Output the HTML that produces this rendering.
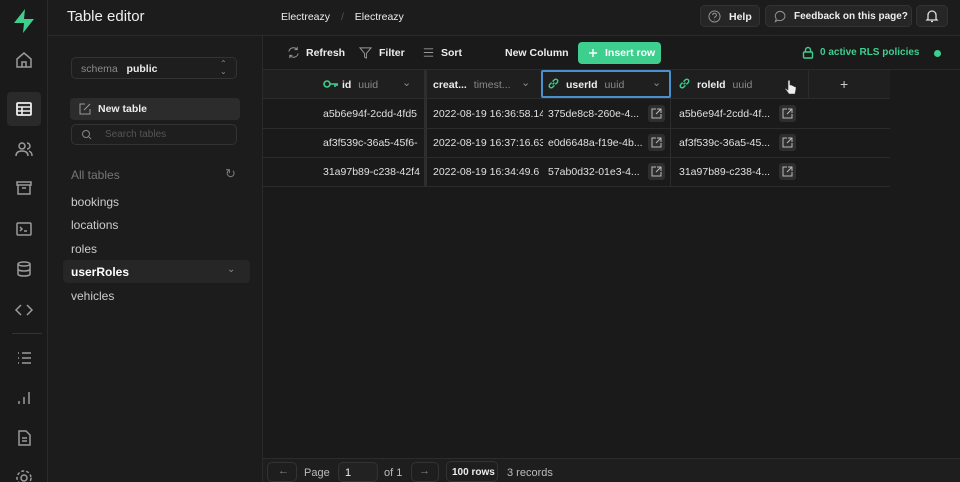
<!DOCTYPE html>
<html><head><style>
*{box-sizing:border-box;margin:0;padding:0}
html,body{width:960px;height:482px;overflow:hidden}
body{background:#1c1c1c;font-family:"Liberation Sans",sans-serif;color:#ededed;position:relative;font-size:11px}
.abs{position:absolute}
.ic{stroke:#9a9a9a;fill:none;stroke-width:1.5}
.b{font-weight:bold;font-size:10.5px}
.g{color:#8a8a8a}
.btn{position:absolute;border:1px solid #333;border-radius:5px;background:#262626}
.cell{position:absolute;font-size:10.5px;color:#e0e0e0;white-space:nowrap;overflow:hidden}
.ext{position:absolute;width:17px;height:17px;background:#2e2e2e;border-radius:3px}
.ext svg{position:absolute;left:3px;top:3px}
</style></head><body>
<div class="abs" style="left:0;top:0;width:48px;height:482px;background:#1a1a1a;border-right:1px solid #2a2a2a"></div>
<svg class="abs" style="left:12px;top:8px" width="24" height="26" viewBox="0 0 24 26"><path d="M13 1 L2 15 H12 L11 25 L22 11 H12 Z" fill="#3ecf8e"/></svg>
<svg class="abs" style="left:14px;top:50px" width="20" height="20" viewBox="0 0 20 20"><path class="ic" d="M3 9 L10 3 L17 9 V17 H3 Z M8 17 V12 H12 V17"/></svg>
<div class="abs" style="left:7px;top:92px;width:34px;height:34px;background:#2a2a2a;border-radius:4px"></div>
<svg class="abs" style="left:14px;top:99px" width="20" height="20" viewBox="0 0 20 20"><rect x="3" y="4" width="14" height="12" rx="1" fill="none" stroke="#eee" stroke-width="1.8"/><path d="M3 8H17M3 12H17M8 8V16" stroke="#eee" stroke-width="1.6"/></svg>
<svg class="abs" style="left:14px;top:139px" width="20" height="20" viewBox="0 0 20 20"><circle class="ic" cx="8" cy="7" r="3"/><path class="ic" d="M2 17c0-4 3-5 6-5s6 1 6 5M13 4a3 3 0 010 6M15 12c2 1 3 2 3 5"/></svg>
<svg class="abs" style="left:14px;top:178px" width="20" height="20" viewBox="0 0 20 20"><path class="ic" d="M3 4H17V7H3Z M4 7V16H16V7 M8 10H12"/></svg>
<svg class="abs" style="left:14px;top:219px" width="20" height="20" viewBox="0 0 20 20"><rect class="ic" x="3" y="4" width="14" height="12" rx="1"/><path class="ic" d="M6 8L8 10L6 12M10 12H13"/></svg>
<svg class="abs" style="left:14px;top:259px" width="20" height="20" viewBox="0 0 20 20"><ellipse class="ic" cx="10" cy="5" rx="6" ry="2"/><path class="ic" d="M4 5V15C4 16 6 17 10 17S16 16 16 15V5M4 10C4 11 6 12 10 12S16 11 16 10"/></svg>
<svg class="abs" style="left:14px;top:300px" width="20" height="20" viewBox="0 0 20 20"><path class="ic" d="M7 5L2 10L7 15M13 5L18 10L13 15"/></svg>
<div class="abs" style="left:12px;top:333px;width:30px;height:1px;background:#333"></div>
<svg class="abs" style="left:14px;top:348px" width="20" height="20" viewBox="0 0 20 20"><path class="ic" d="M4 5H5M4 10H5M4 15H5M8 5H17M8 10H17M8 15H17"/></svg>
<svg class="abs" style="left:14px;top:388px" width="20" height="20" viewBox="0 0 20 20"><path class="ic" d="M5 16V13M10 16V9M15 16V4"/></svg>
<svg class="abs" style="left:14px;top:428px" width="20" height="20" viewBox="0 0 20 20"><path class="ic" d="M5 3H12L16 7V17H5Z M8 10H13M8 13H13"/></svg>
<svg class="abs" style="left:14px;top:468px" width="20" height="20" viewBox="0 0 20 20"><circle class="ic" cx="10" cy="10" r="3"/><circle class="ic" cx="10" cy="10" r="7" stroke-dasharray="3 2"/></svg>
<div class="abs" style="left:48px;top:35px;width:912px;height:1px;background:#2a2a2a"></div>
<div class="abs" style="left:67px;top:8px;font-size:15px;color:#eee">Table editor</div>
<div class="abs" style="left:281px;top:11px;font-size:10.5px">Electreazy <span style="margin:0 8px;color:#555">/</span> Electreazy</div>
<div class="btn" style="left:700px;top:5px;width:60px;height:22px"></div>
<svg class="abs" style="left:708px;top:10px" width="13" height="13" viewBox="0 0 14 14"><circle cx="7" cy="7" r="6" fill="none" stroke="#999"/><path d="M5 5.5a2 2 0 113 1.7c-.8.4-1 .8-1 1.5M7 10.5v.5" stroke="#999" fill="none"/></svg>
<div class="abs b" style="left:729px;top:11px">Help</div>
<div class="btn" style="left:765px;top:5px;width:147px;height:22px"></div>
<svg class="abs" style="left:774px;top:10px" width="13" height="13" viewBox="0 0 14 14"><path d="M7 1.5a5.5 5 0 11-3 9.5L1.5 12.5l1-3A5.5 5 0 017 1.5z" fill="none" stroke="#999"/></svg>
<div class="abs b" style="left:794px;top:11px;font-size:10px">Feedback on this page?</div>
<div class="btn" style="left:916px;top:5px;width:32px;height:22px"></div>
<svg class="abs" style="left:925px;top:9px" width="14" height="14" viewBox="0 0 14 14"><path d="M3 10V6a4 4 0 018 0v4l1 1H2z M6 12.5h2" fill="none" stroke="#ddd" stroke-width="1.3"/></svg>
<div class="abs" style="left:262px;top:36px;width:1px;height:446px;background:#2a2a2a"></div>
<div class="btn" style="left:71px;top:57px;width:166px;height:22px;background:#1e1e1e"></div>
<div class="abs" style="left:81px;top:63px;font-size:10.5px"><span class="g">schema</span>&nbsp;&nbsp; <span class="b">public</span></div>
<div class="abs g" style="left:220px;top:60px;font-size:8px;line-height:8px">&#8963;<br>&#8964;</div>
<div class="abs" style="left:70px;top:98px;width:170px;height:22px;background:#2c2c2c;border-radius:4px"></div>
<svg class="abs" style="left:79px;top:103px" width="12" height="12" viewBox="0 0 12 12"><path d="M6 1H1V11H11V6M5 7L11 1" fill="none" stroke="#999"/></svg>
<div class="abs b" style="left:98px;top:103px">New table</div>
<div class="btn" style="left:71px;top:124px;width:166px;height:21px;background:#1e1e1e"></div>
<svg class="abs" style="left:81px;top:129px" width="11" height="11" viewBox="0 0 11 11"><circle cx="5" cy="5" r="3.5" fill="none" stroke="#888"/><path d="M8 8L10 10" stroke="#888"/></svg>
<div class="abs" style="left:105px;top:129px;font-size:10px;color:#555">Search tables</div>
<div class="abs" style="left:71px;top:168px;font-size:12px;color:#777">All tables</div>
<div class="abs" style="left:225px;top:166px;font-size:13px;color:#777">&#x21bb;</div>
<div class="abs" style="left:71px;top:195px;font-size:12px;color:#ccc">bookings</div>
<div class="abs" style="left:71px;top:218px;font-size:12px;color:#ccc">locations</div>
<div class="abs" style="left:71px;top:242px;font-size:12px;color:#ccc">roles</div>
<div class="abs" style="left:63px;top:260px;width:187px;height:23px;background:#262626;border-radius:4px"></div>
<div class="abs" style="left:71px;top:265px;font-size:12px;color:#fff;font-weight:bold">userRoles</div>
<div class="abs g" style="left:227px;top:264px;font-size:10px">&#8964;</div>
<div class="abs" style="left:71px;top:289px;font-size:12px;color:#ccc">vehicles</div>
<div class="abs" style="left:263px;top:36px;width:697px;height:422px;background:#1a1a1a"></div>
<div class="abs" style="left:263px;top:69px;width:697px;height:1px;background:#2a2a2a"></div>
<svg class="abs" style="left:287px;top:46px" width="13" height="13" viewBox="0 0 14 14"><path d="M2 6a5 5 0 019-2M12 8a5 5 0 01-9 2M11 1v3H8M3 13v-3h3" fill="none" stroke="#999"/></svg>
<div class="abs b" style="left:306px;top:47px">Refresh</div>
<svg class="abs" style="left:359px;top:46px" width="13" height="13" viewBox="0 0 14 14"><path d="M1 2H13L8 8V13L6 12V8Z" fill="none" stroke="#999"/></svg>
<div class="abs b" style="left:379px;top:47px">Filter</div>
<svg class="abs" style="left:422px;top:46px" width="13" height="13" viewBox="0 0 14 14"><path d="M2 3H12M2 7H12M2 11H12" stroke="#999"/></svg>
<div class="abs b" style="left:441px;top:47px">Sort</div>
<div class="abs b" style="left:505px;top:47px">New Column</div>
<div class="abs" style="left:578px;top:42px;width:83px;height:22px;background:#3ecf8e;border-radius:4px"></div>
<svg class="abs" style="left:588px;top:48px" width="10" height="10" viewBox="0 0 10 10"><path d="M5 1V9M1 5H9" stroke="#fff" stroke-width="1.4"/></svg>
<div class="abs b" style="left:605px;top:47px;color:#fff">Insert row</div>
<svg class="abs" style="left:802px;top:46px" width="12" height="13" viewBox="0 0 12 13"><rect x="1.5" y="6" width="9" height="6" rx="1" fill="none" stroke="#3ecf8e" stroke-width="1.4"/><path d="M3.5 6V4a2.5 2.5 0 015 0v2" fill="none" stroke="#3ecf8e" stroke-width="1.4"/></svg>
<div class="abs b" style="left:820px;top:47px;color:#3ecf8e;font-size:10px">0 active RLS policies</div>
<div class="abs" style="left:934px;top:50px;width:7px;height:7px;border-radius:50%;background:#3ecf8e"></div>
<div class="abs" style="left:263px;top:70px;width:627px;height:29px;background:#1f1f1f;border-bottom:1px solid #2c2c2c"></div>
<div class="abs" style="left:424px;top:70px;width:3px;height:116px;background:#2e2e2e"></div>
<div class="abs" style="left:670px;top:70px;width:1px;height:116px;background:#2c2c2c"></div>
<div class="abs" style="left:808px;top:70px;width:1px;height:29px;background:#2c2c2c"></div>
<svg class="abs" style="left:323px;top:79px" width="16" height="10" viewBox="0 0 16 10"><circle cx="4" cy="5" r="3" fill="none" stroke="#3ecf8e" stroke-width="1.6"/><path d="M7 5H15M12 5V8M14 5V7" stroke="#3ecf8e" stroke-width="1.6"/></svg>
<div class="abs b" style="left:342px;top:79px">id <span class="g" style="font-weight:normal;margin-left:4px">uuid</span></div>
<div class="abs g" style="left:402px;top:76px">&#8964;</div>
<div class="abs b" style="left:433px;top:79px">creat... <span class="g" style="font-weight:normal;margin-left:4px">timest...</span></div>
<div class="abs g" style="left:521px;top:76px">&#8964;</div>
<div class="abs" style="left:541px;top:70px;width:130px;height:28px;border:2px solid #4a90d0;border-radius:2px"></div>
<svg class="abs" style="left:547px;top:77px" width="13" height="13" viewBox="0 0 14 14"><path d="M6 8L8 6M5 6L3 8a2 2 0 003 3L8 9M9 8l2-2a2 2 0 00-3-3L6 5" fill="none" stroke="#3ecf8e" stroke-width="1.5"/></svg>
<div class="abs b" style="left:566px;top:79px">userId <span class="g" style="font-weight:normal;margin-left:4px">uuid</span></div>
<div class="abs g" style="left:652px;top:76px">&#8964;</div>
<svg class="abs" style="left:678px;top:77px" width="13" height="13" viewBox="0 0 14 14"><path d="M6 8L8 6M5 6L3 8a2 2 0 003 3L8 9M9 8l2-2a2 2 0 00-3-3L6 5" fill="none" stroke="#3ecf8e" stroke-width="1.5"/></svg>
<div class="abs b" style="left:697px;top:79px">roleId <span class="g" style="font-weight:normal;margin-left:4px">uuid</span></div>
<svg class="abs" style="left:785px;top:80px" width="12" height="16" viewBox="0 0 12 16"><path d="M3 1V10L1 8.5C0 8 0 9.5 1 10L4 14H10L11 9V7L9 6.5V6L7 5.5V5L5 5V1C5 0 3 0 3 1Z" fill="#eee" stroke="#333" stroke-width=".6"/></svg>
<div class="abs" style="left:840px;top:76px;font-size:14px;color:#ccc">+</div>
<div class="abs" style="left:263px;top:128px;width:627px;height:1px;background:#2c2c2c"></div>
<div class="abs" style="left:263px;top:157px;width:627px;height:1px;background:#2c2c2c"></div>
<div class="abs" style="left:263px;top:186px;width:627px;height:1px;background:#2c2c2c"></div>

<div class="cell" style="left:323px;top:108px;width:100px">a5b6e94f-2cdd-4fd5</div>
<div class="cell" style="left:433px;top:108px;width:110px">2022-08-19 16:36:58.14</div>
<div class="cell" style="left:548px;top:108px">375de8c8-260e-4...</div>
<div class="ext" style="left:648px;top:105px"><svg width="11" height="11" viewBox="0 0 11 11"><path d="M5 1H1V10H10V6M6 1H10V5M10 1L5 6" fill="none" stroke="#bbb"/></svg></div>
<div class="cell" style="left:679px;top:108px">a5b6e94f-2cdd-4f...</div>
<div class="ext" style="left:779px;top:105px"><svg width="11" height="11" viewBox="0 0 11 11"><path d="M5 1H1V10H10V6M6 1H10V5M10 1L5 6" fill="none" stroke="#bbb"/></svg></div>

<div class="cell" style="left:323px;top:137px;width:100px">af3f539c-36a5-45f6-</div>
<div class="cell" style="left:433px;top:137px;width:110px">2022-08-19 16:37:16.63</div>
<div class="cell" style="left:548px;top:137px">e0d6648a-f19e-4b...</div>
<div class="ext" style="left:648px;top:134px"><svg width="11" height="11" viewBox="0 0 11 11"><path d="M5 1H1V10H10V6M6 1H10V5M10 1L5 6" fill="none" stroke="#bbb"/></svg></div>
<div class="cell" style="left:679px;top:137px">af3f539c-36a5-45...</div>
<div class="ext" style="left:779px;top:134px"><svg width="11" height="11" viewBox="0 0 11 11"><path d="M5 1H1V10H10V6M6 1H10V5M10 1L5 6" fill="none" stroke="#bbb"/></svg></div>

<div class="cell" style="left:323px;top:166px;width:100px">31a97b89-c238-42f4</div>
<div class="cell" style="left:433px;top:166px;width:110px">2022-08-19 16:34:49.6</div>
<div class="cell" style="left:548px;top:166px">57ab0d32-01e3-4...</div>
<div class="ext" style="left:648px;top:163px"><svg width="11" height="11" viewBox="0 0 11 11"><path d="M5 1H1V10H10V6M6 1H10V5M10 1L5 6" fill="none" stroke="#bbb"/></svg></div>
<div class="cell" style="left:679px;top:166px">31a97b89-c238-4...</div>
<div class="ext" style="left:779px;top:163px"><svg width="11" height="11" viewBox="0 0 11 11"><path d="M5 1H1V10H10V6M6 1H10V5M10 1L5 6" fill="none" stroke="#bbb"/></svg></div>
<div class="abs" style="left:263px;top:458px;width:697px;height:24px;background:#1e1e1e;border-top:1px solid #2c2c2c"></div>
<div class="btn" style="left:267px;top:462px;width:30px;height:20px;background:#1e1e1e"></div>
<div class="abs g" style="left:278px;top:465px">&#8592;</div>
<div class="abs" style="left:304px;top:467px;color:#bbb">Page</div>
<div class="btn" style="left:338px;top:462px;width:40px;height:20px;background:#222"></div>
<div class="abs" style="left:345px;top:467px">1</div>
<div class="abs" style="left:384px;top:467px;color:#bbb">of 1</div>
<div class="btn" style="left:411px;top:462px;width:28px;height:20px;background:#1e1e1e"></div>
<div class="abs g" style="left:419px;top:465px">&#8594;</div>
<div class="btn" style="left:446px;top:461px;width:52px;height:21px;background:#1e1e1e"></div>
<div class="abs b" style="left:452px;top:467px;font-size:10px">100 rows</div>
<div class="abs" style="left:507px;top:467px;color:#bbb">3 records</div>
</body></html>
